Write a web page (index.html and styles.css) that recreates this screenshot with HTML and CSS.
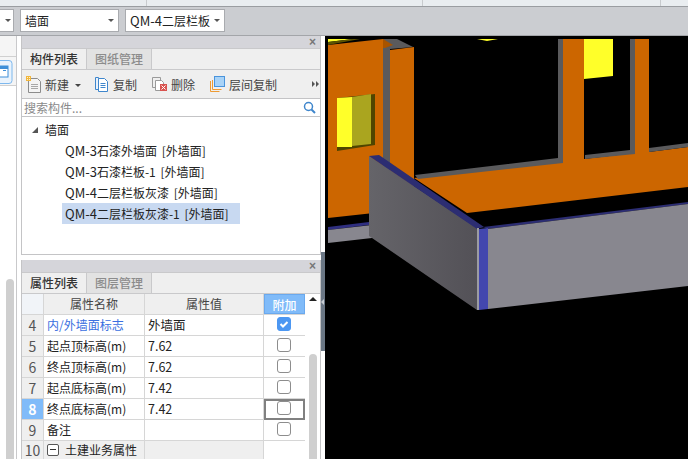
FILE: index.html
```html
<!DOCTYPE html>
<html lang="zh-CN">
<head>
    <meta charset="UTF-8">
    <meta name="viewport" content="width=device-width, initial-scale=1.0">
    <title>构件列表</title>
    <link rel="stylesheet" href="styles.css">
</head>
<body>
    <div class="top-strip">
        <div class="strip-cell strip-a"></div>
        <div class="strip-cell strip-b"></div>
        <div class="strip-cell strip-c"></div>
    </div>
    <div class="combo-bar">
        <div class="combo combo-first"><span class="combo-arrow"></span></div>
        <div class="combo combo-wall"><span>墙面</span><span class="combo-arrow"></span></div>
        <div class="combo combo-name"><span><span class="code">QM-4</span>二层栏板</span><span class="combo-arrow"></span></div>
    </div>

    <div class="main">
        <div class="side">
            <div class="side-inner">
                <div class="side-head"></div>
                <div class="side-icon-row">
                    <svg class="side-icon" width="14" height="24" viewBox="0 0 14 24">
                        <rect x="-6" y="0.5" width="18" height="23" rx="3" fill="#eaf3fc" stroke="#7db8ee"/>
                        <rect x="-2" y="6" width="10" height="11" fill="#fff" stroke="#3f8fd8"/>
                        <rect x="-2" y="6" width="10" height="3" fill="#3f8fd8"/>
                        <rect x="3" y="10" width="3" height="1" fill="#3f8fd8"/>
                    </svg>
                </div>
                <div class="side-list">
                    <div class="side-scroll"></div>
                </div>
            </div>
        </div>

        <div class="panels">
            <section class="panel panel-list">
                <div class="panel-head"><span class="close">×</span></div>
                <div class="tabs">
                    <div class="tab tab-on">构件列表</div>
                    <div class="tab">图纸管理</div>
                </div>
                <div class="tools">
                    <div class="tool tool-new">
                        <svg width="16" height="17" viewBox="0 0 16 17">
                            <path d="M2.5 2.5h9l3 3v11h-12z" fill="#f4f4f4" stroke="#8c8c8c"/>
                            <path d="M5 8.5h7M5 10.5h7M5 12.5h7" stroke="#a8a8a8"/>
                            <rect x="0" y="0" width="5" height="5" fill="#f2b63c"/>
                            <path d="M1 1h1v1H1zM3 3h1v1H3zM3 1h1v1H3zM1 3h1v1H1z" fill="#fff3c8"/>
                        </svg>
                        <span>新建</span>
                        <span class="tool-arrow"></span>
                    </div>
                    <div class="tool tool-copy">
                        <svg width="14" height="16" viewBox="0 0 14 16">
                            <path d="M0.5 1.5h3v12h-3z" fill="#eaf2fb" stroke="#3f86cc"/>
                            <path d="M3.5 2.5h6l3 3v10h-9z" fill="#fff" stroke="#3f86cc"/>
                            <path d="M5.5 7.5h5M5.5 9.5h5M5.5 11.5h5" stroke="#3f86cc"/>
                        </svg>
                        <span>复制</span>
                    </div>
                    <div class="tool tool-del">
                        <svg width="15" height="16" viewBox="0 0 15 16">
                            <path d="M0.5 1.5h8v10h-8z" fill="none" stroke="#9a9a9a"/>
                            <path d="M3.5 4.5h6l2 2v8h-8z" fill="#fff" stroke="#9a9a9a"/>
                            <rect x="8" y="8" width="7" height="7" fill="#d9534f"/>
                            <path d="M9.5 9.5l4 4M13.5 9.5l-4 4" stroke="#fff"/>
                        </svg>
                        <span>删除</span>
                    </div>
                    <div class="tool tool-floor">
                        <svg width="16" height="16" viewBox="0 0 16 16">
                            <path d="M0.5 5v10.5h9M2.5 4v9.5h9" fill="none" stroke="#ee9a32"/>
                            <rect x="4.5" y="0.5" width="10" height="10" fill="#a9d3f7" stroke="#4a94dc"/>
                        </svg>
                        <span>层间复制</span>
                    </div>
                    <div class="tool-more"><i></i><i></i></div>
                </div>
                <div class="search">
                    <span>搜索构件...</span>
                    <svg width="13" height="13" viewBox="0 0 13 13">
                        <circle cx="5.5" cy="5.5" r="4" fill="none" stroke="#3f86cc" stroke-width="1.5"/>
                        <path d="M8.5 8.5l3.5 3.5" stroke="#3f86cc" stroke-width="2"/>
                    </svg>
                </div>
                <div class="tree">
                    <div class="tree-root"><span class="tree-arrow"></span>墙面</div>
                    <div class="tree-item"><span class="code">QM-3</span>石漆外墙面 [外墙面]</div>
                    <div class="tree-item"><span class="code">QM-3</span>石漆栏板-1 [外墙面]</div>
                    <div class="tree-item"><span class="code">QM-4</span>二层栏板灰漆 [外墙面]</div>
                    <div class="tree-item tree-sel"><span class="code">QM-4</span>二层栏板灰漆-1 [外墙面]</div>
                </div>
            </section>

            <section class="panel panel-props">
                <div class="panel-head"><span class="close">×</span></div>
                <div class="tabs">
                    <div class="tab tab-on">属性列表</div>
                    <div class="tab">图层管理</div>
                </div>
                <div class="props">
                    <div class="grid">
                        <div class="row row-head">
                            <div class="c-num"></div>
                            <div class="c-name">属性名称</div>
                            <div class="c-val">属性值</div>
                            <div class="c-add">附加</div>
                        </div>
                        <div class="row">
                            <div class="c-num">4</div>
                            <div class="c-name link">内/外墙面标志</div>
                            <div class="c-val">外墙面</div>
                            <div class="c-add"><span class="check check-on">
                                <svg width="16" height="16" viewBox="0 0 16 16"><path d="M4.5 8l2.5 2.5 4.5-4.5" fill="none" stroke="#fff" stroke-width="2"/></svg>
                            </span></div>
                        </div>
                        <div class="row">
                            <div class="c-num">5</div>
                            <div class="c-name">起点顶标高(m)</div>
                            <div class="c-val">7.62</div>
                            <div class="c-add"><span class="check"></span></div>
                        </div>
                        <div class="row">
                            <div class="c-num">6</div>
                            <div class="c-name">终点顶标高(m)</div>
                            <div class="c-val">7.62</div>
                            <div class="c-add"><span class="check"></span></div>
                        </div>
                        <div class="row">
                            <div class="c-num">7</div>
                            <div class="c-name">起点底标高(m)</div>
                            <div class="c-val">7.42</div>
                            <div class="c-add"><span class="check"></span></div>
                        </div>
                        <div class="row">
                            <div class="c-num c-num-on">8</div>
                            <div class="c-name">终点底标高(m)</div>
                            <div class="c-val">7.42</div>
                            <div class="c-add c-focus"><span class="check"></span></div>
                        </div>
                        <div class="row">
                            <div class="c-num">9</div>
                            <div class="c-name">备注</div>
                            <div class="c-val"></div>
                            <div class="c-add"><span class="check"></span></div>
                        </div>
                        <div class="row row-group">
                            <div class="c-num">10</div>
                            <div class="c-name"><span class="minus"></span>土建业务属性</div>
                            <div class="c-val"></div>
                            <div class="c-add"></div>
                        </div>
                    </div>
                    <div class="vscroll">
                        <span class="vscroll-up"></span>
                        <span class="vscroll-thumb"></span>
                    </div>
                </div>
            </section>
        </div>

        <div class="gutter">
            <div class="gutter-bar"><span class="gutter-arrow"></span></div>
        </div>

        <svg class="view" width="363" height="423" viewBox="325 36 363 423">
            <rect x="325" y="36" width="363" height="423" fill="#000"/>

            <!-- back wall, left part -->
            <polygon points="328,45 383,39 383,212 328,218" fill="#cc6600"/>
            <polygon points="328,39 353,39 328,42" fill="#ffff29"/>
            <polygon points="328,42 353,39 360,39 328,45" fill="#5c5200"/>
            <polygon points="337,98 375,94 375,145 337,151" fill="#4f4500"/>
            <polygon points="337,98 352,97 352,147 337,147" fill="#ffff29"/>
            <polygon points="352,97 371,94 371,144 352,146" fill="#aaa51f"/>
            <polygon points="383,39 397,39 413,47 390,49 390,200 383,200" fill="#5a5a5c"/>
            <polygon points="383,39 393,45 385,48 383,48" fill="#a85400"/>
            <polygon points="390,50 414,47 414,200 390,200" fill="#cc6600"/>
            <polygon points="477,39 498,39 487,41" fill="#ffff29"/>

            <!-- back wall, right part -->
            <polygon points="414,178 563,161 563,39 584,39 584,159 635,153 635,39 649,39 649,152 688,147 688,187 467,213 414,178" fill="#cc6600"/>
            <polygon points="415,175 558,158 558,39 563,39 563,163 418,179" fill="#5a5a5c"/>
            <polygon points="584,39 613,39 613,76 584,79" fill="#ffff29"/>
            <polygon points="585,155 630,150 630,39 635,39 635,154 585,159" fill="#5a5a5c"/>
            <polygon points="649,148 688,143 688,147 649,152" fill="#5a5a5c"/>

            <!-- low walls -->
            <polygon points="328,227 369,222 369,225 328,230" fill="#2f2f80"/>
            <polygon points="328,230 372,225 372,238 328,243" fill="#88878f"/>
            <polygon points="483,227 688,202 688,204 488,229" fill="#2c2d72"/>
            <polygon points="488,229 688,204 688,286 488,309" fill="#88878f"/>
            <defs>
                <linearGradient id="face" x1="0" y1="0" x2="1" y2="0">
                    <stop offset="0" stop-color="#656469"/>
                    <stop offset="1" stop-color="#535157"/>
                </linearGradient>
            </defs>
            <polygon points="369,156 477,228 477,310 372,238 369,236" fill="url(#face)"/>
            <polygon points="369,156 379,155 484,227 477,229" fill="#2c2d72"/>
            <rect x="477" y="228" width="2" height="82" fill="#9c9ca2"/>
            <polygon points="479,229 488,228 488,309 479,310" fill="#4347ae"/>
        </svg>
    </div>
</body>
</html>
```

FILE: styles.css
```css
* {
    box-sizing: border-box;
}
html, body {
    margin: 0;
    height: 459px;
    overflow: hidden;
}
body {
    font-family: "Noto Sans CJK SC", "Liberation Sans", sans-serif;
    font-size: 12px;
    color: #222;
    background: #fff;
}
.code {
    font-size: 13px;
}
.top-strip {
    height: 7px;
    display: flex;
    background: #e9edf0;
    border-bottom: 1px solid #9a9da1;
}
.strip-cell {
    border-right: 1px solid #c8cbce;
}
.strip-a {
    width: 147px;
}
.strip-b {
    width: 276px;
}
.strip-c {
    width: 238px;
}
.combo-bar {
    height: 29px;
    display: flex;
    align-items: center;
    gap: 6px;
    background: #cbcdd1;
    border-bottom: 1px solid #a3a5a9;
    padding-bottom: 2px;
}
.combo {
    height: 23px;
    display: flex;
    align-items: center;
    justify-content: space-between;
    padding: 0 4px;
    background: #fff;
    border: 1px solid #a9abaf;
    white-space: nowrap;
}
.combo-first {
    width: 14px;
    padding: 0 2px 0 0;
    border-left: 0;
    justify-content: flex-end;
}
.combo-wall {
    width: 99px;
}
.combo-name {
    width: 100px;
}
.combo-arrow {
    width: 0;
    height: 0;
    border: 3px solid transparent;
    border-top: 3px solid #555;
    border-bottom: 0;
}

.main {
    height: 423px;
    display: flex;
}

.side {
    width: 21px;
    background: #fff;
}
.side-inner {
    width: 17px;
    height: 100%;
    background: #f5f5f5;
    border-right: 1px solid #c9c9cb;
    display: flex;
    flex-direction: column;
}
.side-head {
    height: 21px;
    flex: none;
    border-bottom: 1px solid #d0d0d0;
}
.side-icon-row {
    height: 29px;
    flex: none;
    padding-top: 3px;
    border-bottom: 1px solid #d0d0d0;
}
.side-icon {
    display: block;
}
.side-list {
    flex: 1;
    min-height: 0;
    overflow: hidden;
    background: #fff;
    padding-top: 193px;
    padding-left: 6px;
}
.side-scroll {
    width: 8px;
    height: 200px;
    border-radius: 4px 4px 0 0;
    background: #cfcfcf;
}

.panels {
    width: 300px;
    flex: none;
    display: flex;
    flex-direction: column;
    gap: 5px;
}
.panel {
    border: 1px solid #c4c4c6;
    border-top: 0;
    background: #fff;
    display: flex;
    flex-direction: column;
}
.panel-list {
    height: 219px;
    flex: none;
}
.panel-props {
    flex: 1;
    min-height: 0;
    border-bottom: 0;
}
.panel-head {
    height: 12px;
    background: #d5d5da;
    display: flex;
    justify-content: flex-end;
    align-items: center;
    padding-right: 4px;
    flex: none;
}
.close {
    font-family: "Liberation Sans", sans-serif;
    font-size: 12px;
    font-weight: bold;
    line-height: 12px;
    color: #777;
}
.tabs {
    height: 22px;
    display: flex;
    background: #efefef;
    border-top: 1px solid #c9c9cb;
    border-bottom: 1px solid #c9c9cb;
    flex: none;
}
.tab {
    width: 65px;
    padding-left: 8px;
    line-height: 20px;
    font-weight: 500;
    color: #8c8c8c;
    background: #e2e2e2;
    border-right: 1px solid #c9c9cb;
}
.tab-on {
    color: #333;
    background: #efefef;
}

.tools {
    height: 29px;
    display: flex;
    align-items: center;
    background: #efefef;
    border-bottom: 1px solid #c4c4c6;
    padding-left: 4px;
    flex: none;
    color: #444;
}
.tool {
    display: flex;
    align-items: center;
}
.tool svg {
    flex: none;
}
.tool-new {
    width: 69px;
    gap: 3px;
}
.tool-copy {
    width: 57px;
    gap: 4px;
}
.tool-del {
    width: 58px;
    gap: 4px;
}
.tool-floor {
    width: 102px;
    gap: 3px;
}
.tool-arrow {
    width: 0;
    height: 0;
    margin-left: 3px;
    border: 3px solid transparent;
    border-top: 3px solid #444;
    border-bottom: 0;
    margin-top: 2px;
}
.tool-more {
    display: flex;
}
.tool-more i {
    width: 0;
    height: 0;
    border: 3px solid transparent;
    border-left: 3px solid #555;
    border-right: 0;
    margin-right: 1px;
}

.search {
    height: 18px;
    display: flex;
    align-items: center;
    justify-content: space-between;
    padding: 0 4px 0 2px;
    color: #8a8a8a;
    border-bottom: 1px solid #c4c4c6;
    flex: none;
}

.tree {
    flex: 1;
    padding-top: 2px;
}
.tree-root {
    height: 21px;
    line-height: 19px;
    display: flex;
    align-items: center;
    padding-left: 10px;
    gap: 6px;
}
.tree-arrow {
    width: 0;
    height: 0;
    border-left: 6px solid transparent;
    border-bottom: 6px solid #555;
    margin-right: 1px;
}
.tree-item {
    height: 21px;
    line-height: 21px;
    margin-left: 40px;
    padding-left: 3px;
    white-space: nowrap;
    word-spacing: 2px;
}
.tree-sel {
    width: 178px;
    background: #c8d9f1;
}

.props {
    flex: 1;
    display: flex;
    min-height: 0;
}
.grid {
    width: 283px;
    flex: none;
}
.row {
    height: 21px;
    display: flex;
    border-bottom: 1px solid #d6d6d6;
}
.row-head {
    background: #efefef;
}
.c-num {
    width: 22px;
    flex: none;
    text-align: center;
    font-size: 14px;
    line-height: 20px;
    color: #555;
    background: #efefef;
    border-right: 1px solid #d6d6d6;
}
.row-head .c-num {
    background: #f1f4f8;
}
.c-num-on {
    background: #80bbf9;
    color: #fff;
    font-weight: bold;
}
.c-name {
    width: 101px;
    flex: none;
    padding-left: 3px;
    line-height: 20px;
    white-space: nowrap;
    border-right: 1px solid #d6d6d6;
}
.c-val {
    width: 119px;
    flex: none;
    padding-left: 3px;
    font-size: 12.5px;
    line-height: 20px;
    border-right: 1px solid #d6d6d6;
}
.row-head .c-name,
.row-head .c-val {
    text-align: center;
    font-size: 12px;
    color: #444;
    padding-left: 0;
}
.c-add {
    width: 41px;
    flex: none;
    display: flex;
    justify-content: center;
    align-items: center;
}
.row-head .c-add {
    background: #80bbf9;
    color: #fff;
    border: 1px solid #6aa9ee;
    line-height: 19px;
    font-weight: 500;
}
.c-focus {
    height: 21px;
    border: 2px solid #808080;
}
.link {
    color: #3a6fe0;
}
.check {
    width: 14px;
    height: 14px;
    margin: -3px 2px 0 0;
    border: 1px solid #8d8d8d;
    border-radius: 3px;
    background: #fff;
    display: block;
}
.check-on {
    background: #4c97f2;
    border-color: #4c97f2;
    position: relative;
}
.check-on svg {
    position: absolute;
    left: -2px;
    top: -2px;
}
.row-group {
    height: 18px;
    border-bottom: 0;
}
.row-group .c-num {
    line-height: 18px;
}
.row-group .c-name {
    background: #efefef;
    display: flex;
    align-items: center;
    gap: 6px;
    line-height: 18px;
}
.row-group .c-val {
    background: #efefef;
}
.minus {
    width: 12px;
    height: 12px;
    border: 1px solid #555;
    border-radius: 2px;
    position: relative;
    background: #fff;
    flex: none;
}
.minus::after {
    content: "";
    position: absolute;
    left: 2px;
    right: 2px;
    top: 4px;
    height: 1px;
    background: #333;
}
.vscroll {
    width: 15px;
    flex: none;
    display: flex;
    flex-direction: column;
    align-items: center;
    padding-top: 3px;
    padding-left: 1px;
}
.vscroll-up {
    width: 0;
    height: 0;
    flex: none;
    border: 4px solid transparent;
    border-bottom: 4px solid #222;
    border-top: 0;
}
.vscroll-thumb {
    width: 8px;
    height: 105px;
    flex: none;
    margin-top: 53px;
    border-radius: 4px 4px 0 0;
    background: #cfcfcf;
}

.gutter {
    width: 4px;
    flex: none;
    background: #fff;
    padding-top: 216px;
}
.gutter-bar {
    height: 99px;
    background: #6b7785;
    display: flex;
    align-items: center;
}
.gutter-arrow {
    width: 0;
    height: 0;
    border: 3px solid transparent;
    border-right: 3px solid #c9ced4;
    border-left: 0;
}
.view {
    display: block;
    flex: none;
}
```
